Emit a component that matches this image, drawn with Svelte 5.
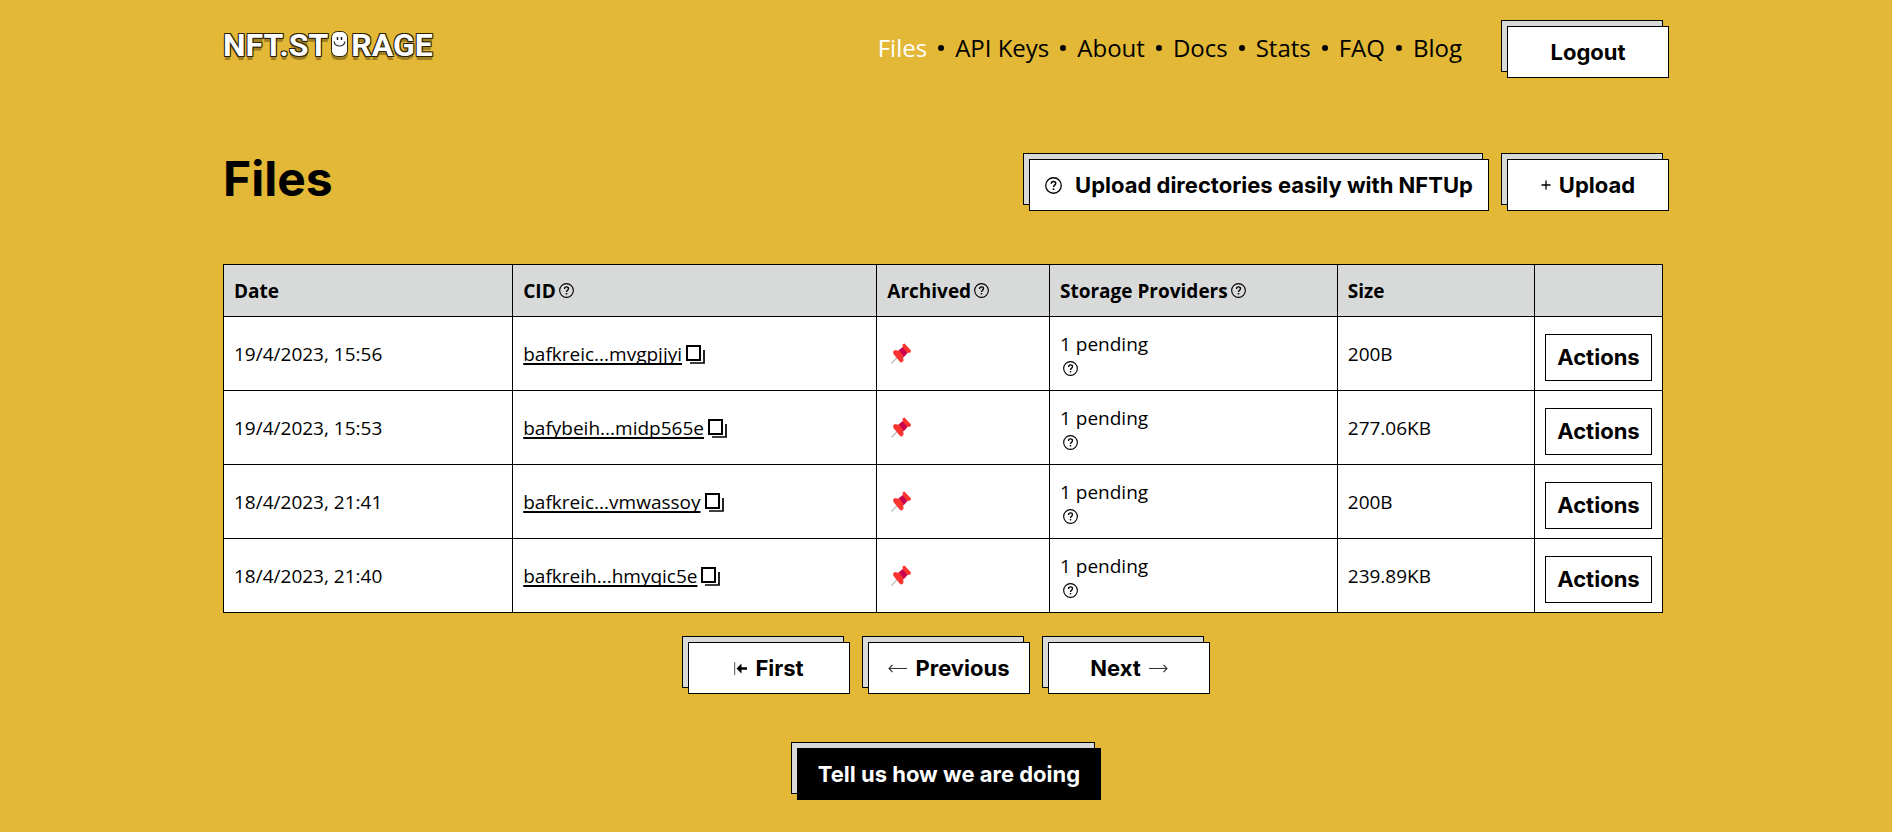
<script>
  const nav = ['Files', 'API Keys', 'About', 'Docs', 'Stats', 'FAQ', 'Blog'];
  const files = [
    { date: '19/4/2023, 15:56', cid: 'bafkreic...mvgpjjyi', size: '200B' },
    { date: '19/4/2023, 15:53', cid: 'bafybeih...midp565e', size: '277.06KB' },
    { date: '18/4/2023, 21:41', cid: 'bafkreic...vmwassoy', size: '200B' },
    { date: '18/4/2023, 21:40', cid: 'bafkreih...hmyqic5e', size: '239.89KB' }
  ];
</script>

{#snippet help(size)}
  <svg class="help" width={size} height={size} viewBox="0 0 16 16" fill="none" stroke="#000" aria-hidden="true">
    <circle cx="8" cy="8" r="7.3" stroke-width="1.2" />
    <path d="M5.9 6.4C5.9 5 6.8 4.2 8 4.2C9.3 4.2 10.1 5 10.1 6.1C10.1 7.6 8 7.8 8 9.5" stroke-width="1.4" />
    <path d="M8 10.7V12.2" stroke-width="1.6" />
  </svg>
{/snippet}

<div class="page">
  <header>
    <a class="logo" href="#home" aria-label="NFT.STORAGE">
      <span>NFT.ST</span>
      <svg width="19" height="32" viewBox="0 0 19 32" aria-hidden="true">
        <rect x="1" y="6" width="17" height="25" rx="6" fill="#a07d20" />
        <rect x="1.5" y="2.5" width="16" height="25" rx="6" fill="#fff" stroke="#2b2208" />
        <path d="M7.5 8V11M11.5 8V11" stroke="#222" stroke-width="1.5" fill="none" />
        <path d="M4 12.5C4.6 15.6 6.500 17 9.5 17C12.500 17 14.400 15.600 15 12.5" stroke="#222" stroke-width="1.2" fill="none" />
      </svg>
      <span>RAGE</span>
    </a>
    <nav>
      {#each nav as item, i}
        {#if i > 0}<i class="dot"></i>{/if}
        <a href="#{item}" class:active={i === 0}>{item}</a>
      {/each}
    </nav>
    <button class="btn"><span class="face">Logout</span></button>
  </header>

  <main>
    <div class="heading">
      <h1>Files</h1>
      <div class="tools">
        <button class="btn wide"><span class="face">{@render help(17)}Upload directories easily with NFTUp</span></button>
        <button class="btn"><span class="face">
          <svg width="10" height="10" viewBox="0 0 10 10" aria-hidden="true"><path d="M5 .5v9M.5 5h9" stroke="#000" stroke-width="1.3" /></svg>
          Upload</span></button>
      </div>
    </div>

    <table>
      <colgroup>
        <col class="c-date" /><col class="c-cid" /><col class="c-arch" /><col class="c-prov" /><col class="c-size" /><col />
      </colgroup>
      <thead>
        <tr>
          <th>Date</th>
          <th><span class="label">CID {@render help(15)}</span></th>
          <th><span class="label">Archived {@render help(15)}</span></th>
          <th><span class="label">Storage Providers {@render help(15)}</span></th>
          <th>Size</th>
          <th aria-label="Actions"></th>
        </tr>
      </thead>
      <tbody>
        {#each files as file}
          <tr>
            <td>{file.date}</td>
            <td>
              <span class="cid">
                <a href="#{file.cid}">{file.cid}</a>
                <button class="copy" aria-label="Copy CID">
                  <svg width="19" height="19" viewBox="0 0 19 19" fill="none" stroke="#000">
                    <rect x="1" y="1" width="13" height="14" stroke-width="2" />
                    <path d="M4 18h14V5" stroke-width="1.7" />
                  </svg>
                </button>
              </span>
            </td>
            <td>
              <svg class="pin" width="22" height="22" viewBox="0 0 22 22" role="img" aria-label="Pinned">
                <path d="M1.5 20.5 9 12.5" stroke="#c4c4c4" stroke-width="1.5" />
                <path d="m9 7 5-4 5 5-4 5-3 2-5-5z" fill="#c9004f" />
                <path d="m12.5 1.5 2-1 6.5 7-.5 2-3 .5L13 5z" fill="#fb342f" />
                <path d="m3 8.5 2-1.5 4.5 1 3.5 4.5.5 5-1.5 2-2-.5-6.5-8z" fill="#fb342f" />
              </svg>
            </td>
            <td><span class="pending">1 pending {@render help(15)}</span></td>
            <td>{file.size}</td>
            <td><button class="action">Actions</button></td>
          </tr>
        {/each}
      </tbody>
    </table>

    <div class="pager">
      <button class="btn"><span class="face">
        <svg width="13" height="13" viewBox="0 0 13 13" aria-hidden="true"><path d="M.7 0v13" stroke="#555" /><path d="M2.5 6.5 7.5 1.5v3.7H13v2.6H7.5v3.7z" /></svg>
        First</span></button>
      <button class="btn"><span class="face">
        <svg width="19" height="9" viewBox="0 0 19 9" fill="none" stroke="#333" aria-hidden="true"><path d="M1 4.5h18M4.5.8 1 4.5l3.5 3.7" stroke-width="1.2" /></svg>
        Previous</span></button>
      <button class="btn"><span class="face">Next
        <svg width="19" height="9" viewBox="0 0 19 9" fill="none" stroke="#333" aria-hidden="true"><path d="M18 4.5H0M14.5.8 18 4.5l-3.5 3.7" stroke-width="1.2" /></svg>
      </span></button>
    </div>

    <div class="feedback">
      <button class="btn dark"><span class="face">Tell us how we are doing</span></button>
    </div>
  </main>
</div>

<style>
  :global(body) {
    margin: 0;
    background: #e2b836;
  }

  .page {
    padding: 20px 6px 32px 0;
    color: #000;
    font: 19px/24px 'Open Sans', 'Noto Sans', sans-serif;
  }

  header,
  main {
    max-width: 1440px;
    margin: 0 auto;
  }

  header {
    display: flex;
    align-items: center;
  }

  a {
    color: inherit;
  }

  .logo {
    display: flex;
    align-items: center;
    gap: 2px;
    height: 32px;
    margin: 0 auto 2px 0;
    color: #fff;
    font: 700 32px/32px 'Roboto', sans-serif;
    text-decoration: none;
    text-shadow: -1px -1px #2b2208, 1px -1px #2b2208, -1px 1px #2b2208, 1px 1px #2b2208, 0 4px #a07d20;
  }

  nav {
    display: flex;
    align-items: center;
    gap: 11px;
    margin-right: 39px;
    padding-top: 4px;
    font-size: 24px;
    line-height: 32px;
  }

  nav a {
    text-decoration: none;
  }

  nav .active {
    color: #fff;
  }

  .dot {
    width: 6px;
    height: 6px;
    border-radius: 50%;
    background: #000;
  }

  button {
    padding: 0;
    color: #000;
    font: 700 22px/24px 'Inter', sans-serif;
    cursor: pointer;
  }

  .btn {
    box-sizing: border-box;
    min-width: 162px;
    height: 52px;
    border: 1px solid #000;
    background: #d8dad9;
  }

  .face {
    display: flex;
    align-items: center;
    justify-content: center;
    gap: 8px;
    box-sizing: border-box;
    height: 52px;
    margin: -1px;
    padding: 0 12px;
    border: 1px solid #000;
    background: #fff;
    white-space: nowrap;
    transform: translate(6px, 6px);
  }

  .wide {
    min-width: 460px;
  }

  .wide .face {
    gap: 13px;
  }

  .dark {
    min-width: 304px;
  }

  .dark .face {
    background: #000;
    color: #fff;
  }

  .heading {
    display: flex;
    align-items: center;
    justify-content: space-between;
    margin: 81px 0 59px;
  }

  h1 {
    margin: 0;
    font: 700 48px/52px 'Inter', sans-serif;
  }

  .tools,
  .pager {
    display: flex;
    gap: 18px;
  }

  table {
    width: 100%;
    border-collapse: collapse;
    table-layout: fixed;
    background: #fff;
  }

  .c-date { width: 20.1%; }
  .c-cid { width: 25.3%; }
  .c-arch { width: 12%; }
  .c-prov { width: 20%; }
  .c-size { width: 13.7%; }

  th,
  td {
    padding: 0 10px;
    border: 1px solid #000;
    text-align: left;
  }

  th {
    height: 51px;
    background: #d8dad9;
    font-weight: 700;
  }

  td {
    height: 73px;
  }

  .label {
    display: flex;
    align-items: center;
    gap: 3px;
  }

  .cid {
    display: flex;
    align-items: center;
    gap: 4px;
  }

  .cid a {
    text-decoration-thickness: 2px;
    text-underline-offset: 2px;
    text-decoration-skip-ink: none;
  }

  .copy {
    display: flex;
    padding-top: 2px;
    border: 0;
    background: none;
  }

  .pin {
    display: block;
    margin-left: 3px;
  }

  .pending {
    display: flex;
    flex-direction: column;
    gap: 5px;
  }

  .pending :global(.help) {
    margin-left: 3px;
  }

  .action {
    display: block;
    box-sizing: border-box;
    width: 100%;
    height: 47px;
    margin-top: 7px;
    border: 1px solid #000;
    background: #fff;
  }

  .pager {
    justify-content: center;
    margin-top: 23px;
  }

  .feedback {
    display: flex;
    justify-content: center;
    margin-top: 54px;
  }
</style>
